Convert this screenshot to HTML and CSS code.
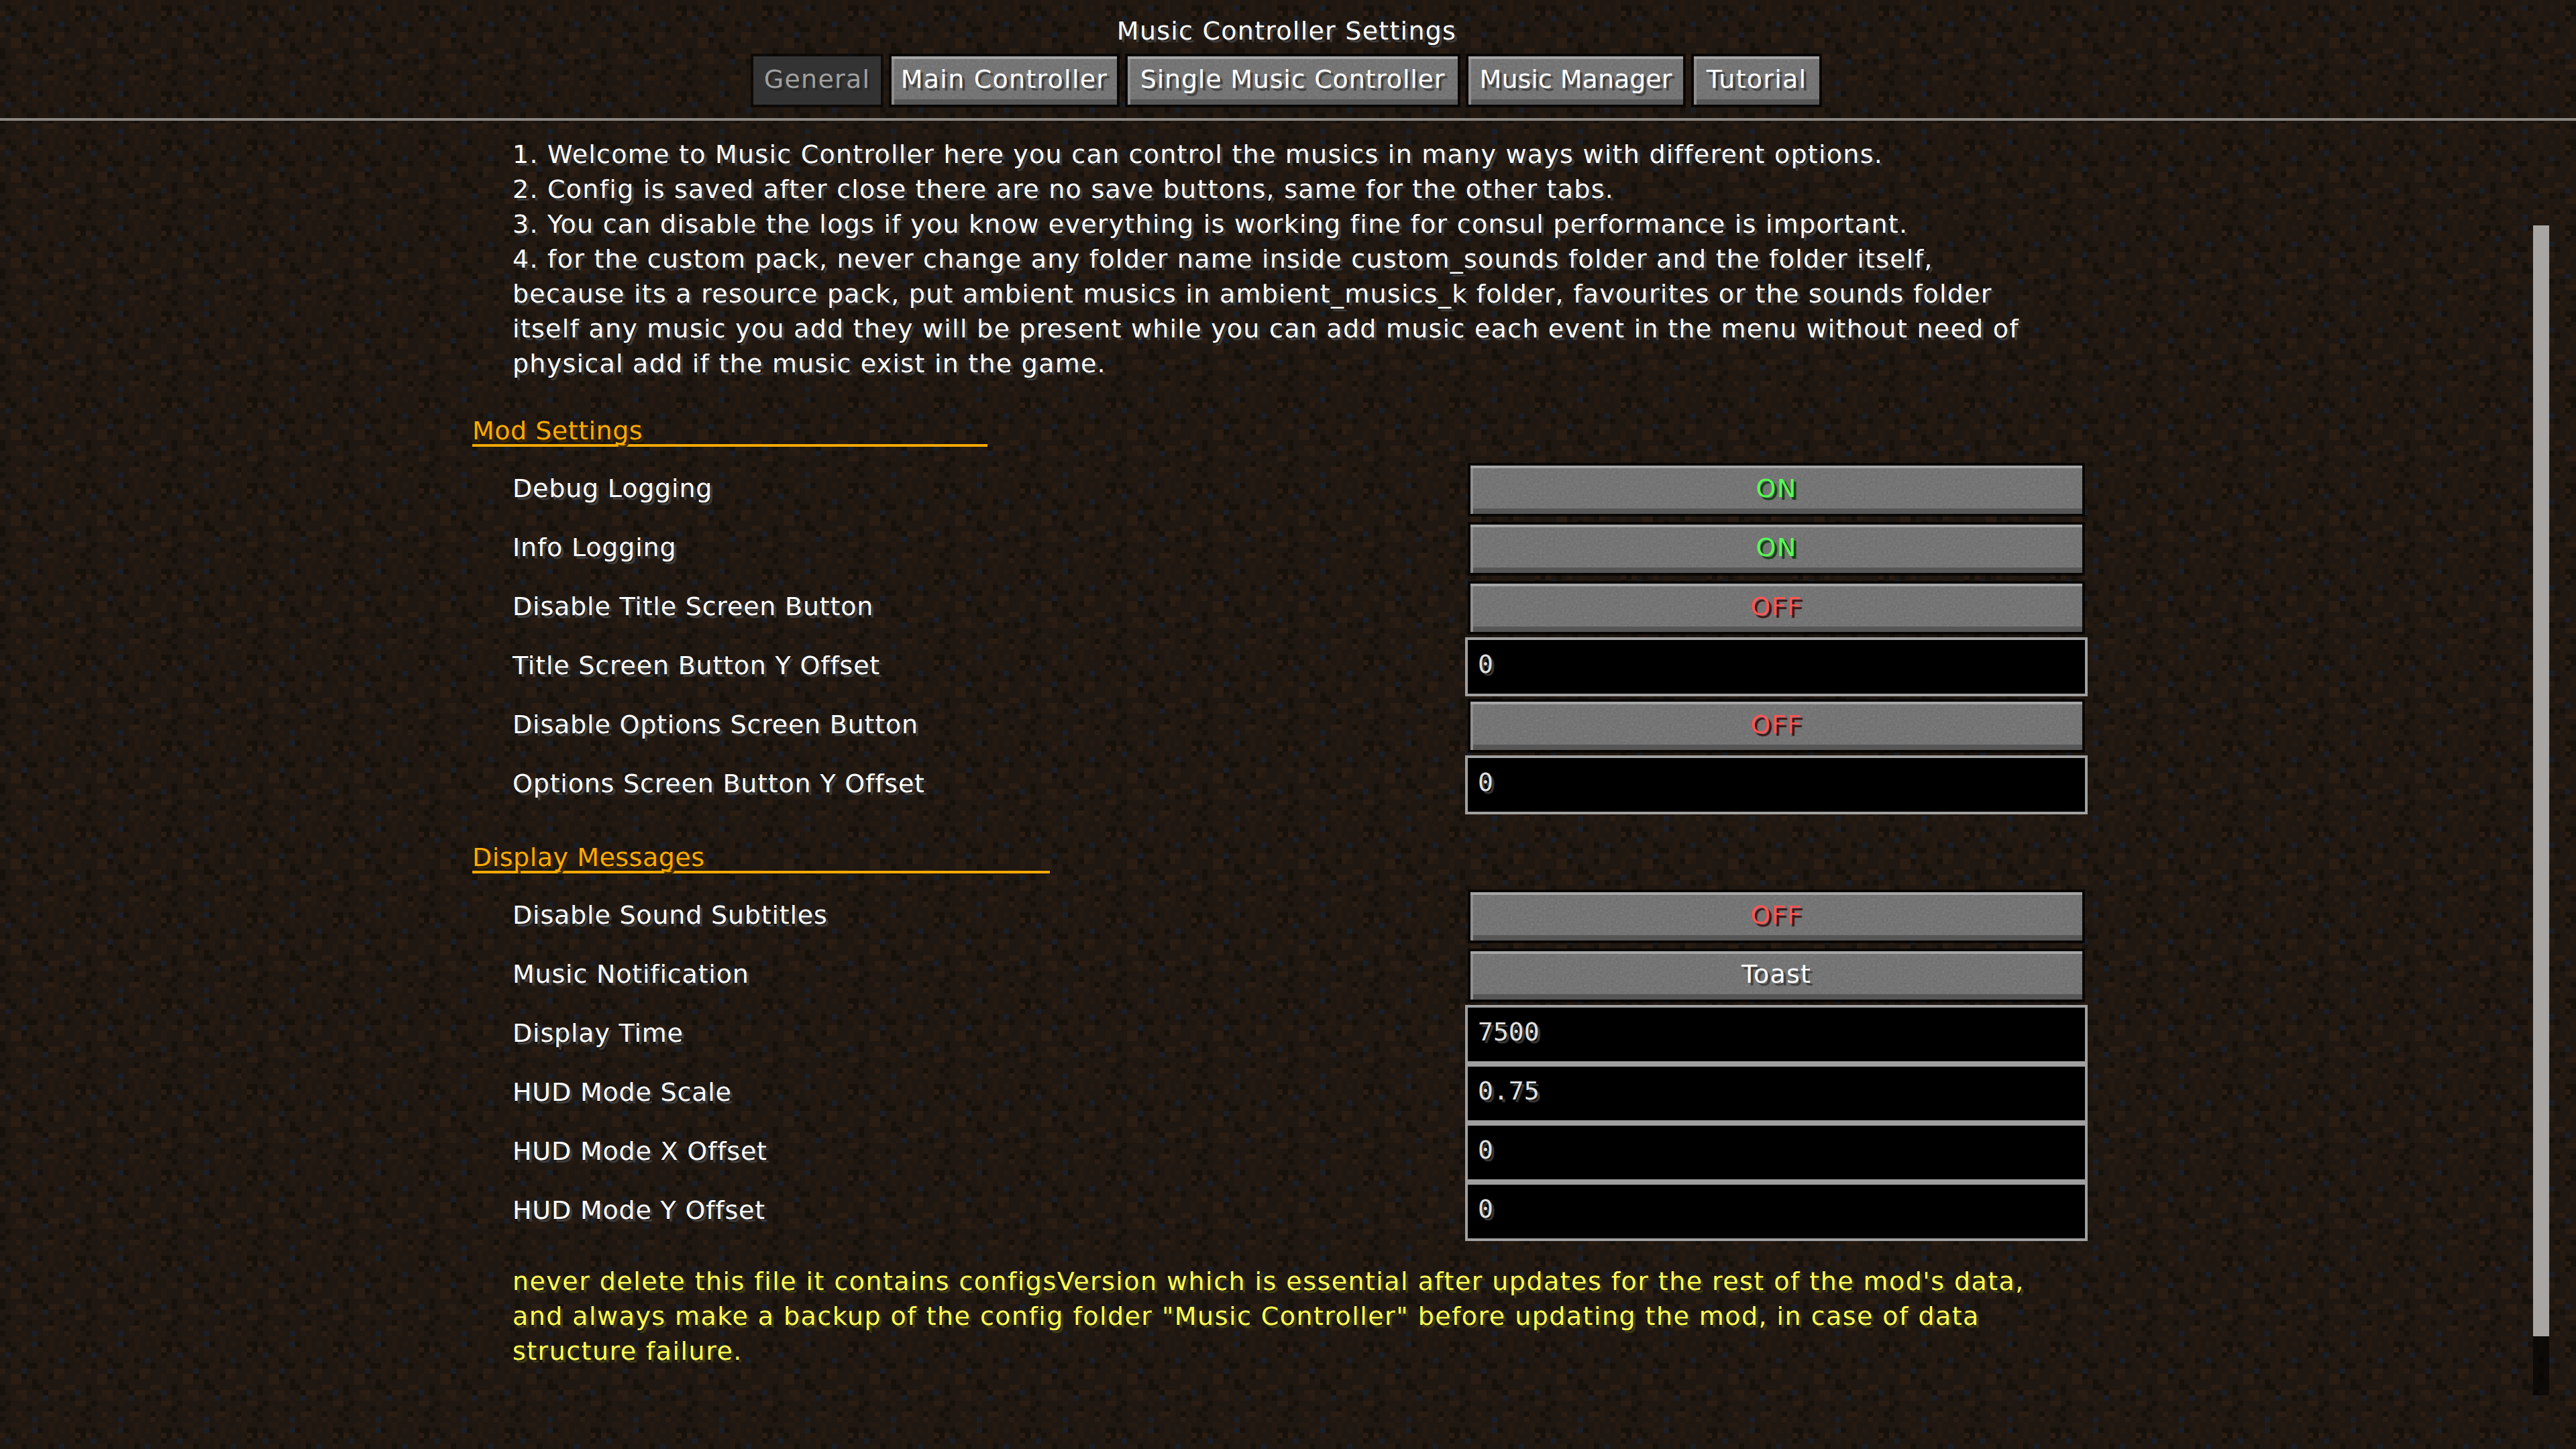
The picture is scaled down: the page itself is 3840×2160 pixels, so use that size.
FILE: index.html
```html
<!DOCTYPE html>
<html>
<head>
  <title>Music Controller Settings</title>
  <link rel="stylesheet" href="styles.css">
</head>
<body>
  <header class="top">
    <div class="title">Music Controller Settings</div>
    <nav class="tabs">
      <button class="btn tab tab-general disabled">General</button>
      <button class="btn tab tab-main">Main Controller</button>
      <button class="btn tab tab-single">Single Music Controller</button>
      <button class="btn tab tab-manager">Music Manager</button>
      <button class="btn tab tab-tutorial">Tutorial</button>
    </nav>
  </header>

  <main class="panel">
    <div class="scrollbar"><div class="thumb"></div></div>
    <div class="content">
      <p class="intro">1. Welcome to Music Controller here you can control the musics in many ways with different options.<br>
      2. Config is saved after close there are no save buttons, same for the other tabs.<br>
      3. You can disable the logs if you know everything is working fine for consul performance is important.<br>
      4. for the custom pack, never change any folder name inside custom_sounds folder and the folder itself,<br>
      because its a resource pack, put ambient musics in ambient_musics_k folder, favourites or the sounds folder<br>
      itself any music you add they will be present while you can add music each event in the menu without need of<br>
      physical add if the music exist in the game.</p>

      <section class="section">
        <h2 class="heading">Mod Settings</h2>
        <div class="row"><span class="label">Debug Logging</span><button class="btn toggle on">ON</button></div>
        <div class="row"><span class="label">Info Logging</span><button class="btn toggle on">ON</button></div>
        <div class="row"><span class="label">Disable Title Screen Button</span><button class="btn toggle off">OFF</button></div>
        <div class="row"><span class="label">Title Screen Button Y Offset</span><div class="field">0</div></div>
        <div class="row"><span class="label">Disable Options Screen Button</span><button class="btn toggle off">OFF</button></div>
        <div class="row"><span class="label">Options Screen Button Y Offset</span><div class="field">0</div></div>
      </section>

      <section class="section">
        <h2 class="heading">Display Messages</h2>
        <div class="row"><span class="label">Disable Sound Subtitles</span><button class="btn toggle off">OFF</button></div>
        <div class="row"><span class="label">Music Notification</span><button class="btn toggle">Toast</button></div>
        <div class="row"><span class="label">Display Time</span><div class="field">7500</div></div>
        <div class="row"><span class="label">HUD Mode Scale</span><div class="field">0.75</div></div>
        <div class="row"><span class="label">HUD Mode X Offset</span><div class="field">0</div></div>
        <div class="row"><span class="label">HUD Mode Y Offset</span><div class="field">0</div></div>
      </section>

      <p class="warning">never delete this file it contains configsVersion which is essential after updates for the rest of the mod's data,<br>
      and always make a backup of the config folder "Music Controller" before updating the mod, in case of data<br>
      structure failure.</p>
    </div>
  </main>
</body>
</html>
```

FILE: styles.css
```css
html, body {
  margin: 0;
  padding: 0;
}

body {
  width: 3840px;
  height: 2160px;
  overflow: hidden;
  font-family: "DejaVu Sans", sans-serif;
  font-size: 38px;
  letter-spacing: 1.25px;
  color: #fff;
  text-shadow: 4px 4px 1px #3f3f3f;
  background-color: #1e1610;
}

/* dirt tile, 16x16 texels drawn at 8px each */
.top, .panel {
  background-color: #1f1711;
  background-image: url("data:image/svg+xml,%3Csvg xmlns='http://www.w3.org/2000/svg' width='128' height='128' viewBox='0 0 16 16' shape-rendering='crispEdges'%3E%3Cpath fill='%232a1d14' d='M0 2h1v1h-1zM4 2h1v1h-1zM14 2h1v1h-1zM0 6h1v1h-1zM10 6h2v1h-2zM2 7h2v2h-2zM10 7h1v1h-1zM12 9h2v1h-2zM3 10h2v1h-2zM9 10h2v1h-2zM4 11h1v1h-1zM14 12h2v1h-2zM3 14h1v1h-1zM8 14h2v1h-2zM12 15h1v1h-1z'/%3E%3Cpath fill='%23241a12' d='M2 0h2v1h-2zM6 0h1v1h-1zM9 0h1v1h-1zM13 0h1v1h-1zM4 1h2v1h-2zM9 1h1v1h-1zM11 1h1v1h-1zM13 1h1v1h-1zM6 2h2v1h-2zM9 2h1v1h-1zM6 3h1v1h-1zM8 3h1v1h-1zM10 3h1v1h-1zM13 3h1v1h-1zM2 4h2v2h-2zM8 4h1v1h-1zM14 4h1v1h-1zM7 5h2v1h-2zM15 5h1v2h-1zM6 6h2v1h-2zM7 7h1v1h-1zM11 7h1v1h-1zM14 7h1v2h-1zM5 8h1v1h-1zM8 9h1v1h-1zM6 10h1v1h-1zM11 10h1v1h-1zM2 11h2v1h-2zM5 11h1v1h-1zM7 11h1v1h-1zM10 11h1v1h-1zM15 11h1v1h-1zM6 12h1v1h-1zM2 13h1v1h-1zM10 13h1v1h-1zM12 13h1v1h-1zM10 14h1v1h-1zM13 14h1v1h-1zM4 15h1v1h-1zM8 15h1v1h-1zM10 15h1v1h-1zM14 15h1v1h-1z'/%3E%3Cpath fill='%2317110c' d='M1 1h1v1h-1zM7 1h1v1h-1zM14 1h2v1h-2zM2 2h1v1h-1zM15 2h1v1h-1zM14 3h1v1h-1zM4 4h1v1h-1zM9 4h1v1h-1zM1 5h1v1h-1zM5 5h2v1h-2zM12 5h1v1h-1zM4 7h1v1h-1zM9 7h1v1h-1zM6 8h1v2h-1zM0 9h1v2h-1zM7 9h1v1h-1zM8 10h1v1h-1zM11 11h1v1h-1zM13 11h1v1h-1zM1 12h1v1h-1zM0 13h1v1h-1zM5 13h1v1h-1zM9 13h1v1h-1zM12 14h1v1h-1zM15 14h1v1h-1zM0 15h1v1h-1z'/%3E%3Cpath fill='%231a1f27' d='M6 1h1v1h-1zM1 3h1v1h-1zM11 4h1v1h-1zM4 6h1v1h-1zM14 10h1v1h-1zM8 11h1v1h-1zM6 15h1v1h-1z'/%3E%3C/svg%3E");
  background-size: 128px 128px;
}

.top {
  box-sizing: border-box;
  height: 180px;
  padding-top: 20px;
  border-bottom: 4px solid #8a8682;
  display: flex;
  flex-direction: column;
  align-items: center;
  gap: 12px;
}

.title {
  margin-right: 4px;
  line-height: 52px;
}

.tabs {
  display: flex;
  gap: 16px;
  margin-right: 5px;
}

.btn {
  display: block;
  box-sizing: border-box;
  height: 72px;
  padding: 0 0 4px;
  border: none;
  font: inherit;
  letter-spacing: inherit;
  color: #fff;
  text-shadow: inherit;
  background-color: #6c6c6c;
  background-image: url("data:image/svg+xml,%3Csvg xmlns='http://www.w3.org/2000/svg' width='240' height='240'%3E%3Cfilter id='n'%3E%3CfeTurbulence type='fractalNoise' baseFrequency='.3' numOctaves='2'/%3E%3CfeColorMatrix type='saturate' values='0'/%3E%3C/filter%3E%3Crect width='240' height='240' filter='url(%23n)' opacity='.22'/%3E%3C/svg%3E");
  box-shadow: inset 0 4px 0 #a6a6a6, inset 4px 0 0 #8e8e8e, inset 0 -8px 0 #565656, 0 0 0 4px rgba(0, 0, 0, 0.72);
}

.tab.disabled {
  color: #a0a0a0;
  text-shadow: 4px 4px 1px #282828;
  background: #333;
  box-shadow: 0 0 0 4px rgba(0, 0, 0, 0.6);
}

.tab-general {
  width: 190px;
}

.tab-main {
  width: 336px;
}

.tab-single {
  width: 492px;
  letter-spacing: 0.8px;
}

.tab-manager {
  width: 320px;
  letter-spacing: 0;
}

.tab-tutorial {
  width: 187px;
}

.panel {
  position: relative;
  height: 1980px;
  background-position: 0 20px;
}

.content {
  width: 2408px;
  margin-left: 704px;
  padding-top: 24px;
}

.intro, .warning {
  margin: 0;
  padding-left: 60px;
  line-height: 52px;
}

.intro {
  padding-bottom: 10px;
}

.section {
  margin-top: 42px;
}

.heading {
  display: inline-block;
  margin: 0 0 20px;
  padding-right: 514px;
  font-size: inherit;
  font-weight: normal;
  letter-spacing: 0.5px;
  line-height: 40px;
  color: #ffaa00;
  text-shadow: 4px 4px 1px #3f2a00;
  border-bottom: 4px solid #f5a900;
}

.row {
  display: grid;
  grid-template-columns: 1480px 928px;
  align-items: center;
  height: 88px;
}

.label {
  padding-left: 60px;
  padding-bottom: 4px;
  letter-spacing: 0.8px;
}

.toggle {
  width: 912px;
  margin-left: 8px;
}

.on {
  color: #55ff55;
  text-shadow: 4px 4px 1px #153f15;
}

.off {
  color: #ff5555;
  text-shadow: 4px 4px 1px #3f1515;
}

.field {
  box-sizing: border-box;
  height: 88px;
  padding-left: 15px;
  border: 4px solid #a0a0a0;
  background: #000;
  font-family: "DejaVu Sans Mono", monospace;
  letter-spacing: 0;
  line-height: 72px;
  color: #e0e0e0;
  text-shadow: 4px 4px 1px #383838;
}

.warning {
  margin-top: 34px;
  letter-spacing: 1.45px;
  color: #ffff55;
  text-shadow: 4px 4px 1px #3f3f15;
}

.scrollbar {
  position: absolute;
  top: 156px;
  right: 40px;
  width: 24px;
  height: 1744px;
  background: rgba(0, 0, 0, 0.6);
}

.thumb {
  height: 1656px;
  background: #a8a5a3;
}
```
